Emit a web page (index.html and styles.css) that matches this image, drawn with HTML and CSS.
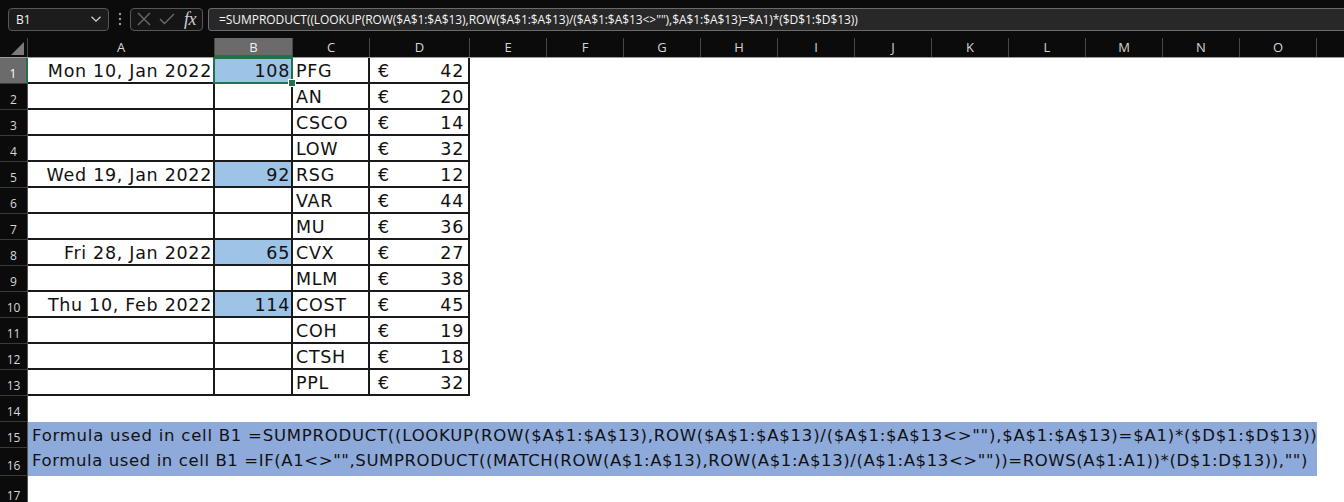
FILE: index.html
```html
<!DOCTYPE html>
<html>
<head>
<meta charset="utf-8">
<link rel="stylesheet" href="styles.css">
</head>
<body>
<div class="bar">
  <div class="namebox">
    <span>B1</span>
    <svg class="chev" width="12" height="8" viewBox="0 0 12 8"><path d="M1.5 1.8 L6 6.2 L10.5 1.8" fill="none" stroke="#cfcfcf" stroke-width="1.3"/></svg>
  </div>
  <div class="dots"><svg width="4" height="14" viewBox="0 0 4 14"><circle cx="2" cy="2" r="1.2" fill="#9a9a9a"/><circle cx="2" cy="7" r="1.2" fill="#9a9a9a"/><circle cx="2" cy="12" r="1.2" fill="#9a9a9a"/></svg></div>
  <div class="fxbox">
    <svg width="14" height="14" viewBox="0 0 14 14"><path d="M1 1 L13 13 M13 1 L1 13" stroke="#6e6e6e" stroke-width="1.3" fill="none"/></svg>
    <svg width="16" height="12" viewBox="0 0 16 12"><path d="M1 6 L5.5 10.5 L15 1" stroke="#6e6e6e" stroke-width="1.3" fill="none"/></svg>
    <i class="fx">fx</i>
  </div>
  <div class="formula">=SUMPRODUCT((LOOKUP(ROW($A$1:$A$13),ROW($A$1:$A$13)/($A$1:$A$13&lt;&gt;""),$A$1:$A$13)=$A1)*($D$1:$D$13))</div>
</div>

<div class="sheet">
  <div class="hrow">
    <div class="corner"><svg width="13" height="13" viewBox="0 0 13 13"><path d="M13 0 L13 13 L0 13 Z" fill="#7a7a7a"/></svg></div>
    <div class="ch ca">A</div>
    <div class="ch cb sel">B</div>
    <div class="ch cc">C</div>
    <div class="ch cd">D</div>
    <div class="ch ce">E</div>
    <div class="ch ce">F</div>
    <div class="ch ce">G</div>
    <div class="ch ce">H</div>
    <div class="ch ce">I</div>
    <div class="ch ce">J</div>
    <div class="ch ce">K</div>
    <div class="ch ce">L</div>
    <div class="ch ce">M</div>
    <div class="ch ce">N</div>
    <div class="ch ce">O</div>
    <div class="ch cp"></div>
  </div>

  <div class="row">
    <div class="rh sel">1</div>
    <div class="c ca r">Mon 10, Jan 2022</div>
    <div class="c cb r fill active">108</div>
    <div class="c cc">PFG</div>
    <div class="c cd"><span>€</span><span>42</span></div>
  </div>
  <div class="row">
    <div class="rh">2</div>
    <div class="c ca r"></div>
    <div class="c cb r"></div>
    <div class="c cc">AN</div>
    <div class="c cd"><span>€</span><span>20</span></div>
  </div>
  <div class="row">
    <div class="rh">3</div>
    <div class="c ca r"></div>
    <div class="c cb r"></div>
    <div class="c cc">CSCO</div>
    <div class="c cd"><span>€</span><span>14</span></div>
  </div>
  <div class="row">
    <div class="rh">4</div>
    <div class="c ca r"></div>
    <div class="c cb r"></div>
    <div class="c cc">LOW</div>
    <div class="c cd"><span>€</span><span>32</span></div>
  </div>
  <div class="row">
    <div class="rh">5</div>
    <div class="c ca r">Wed 19, Jan 2022</div>
    <div class="c cb r fill">92</div>
    <div class="c cc">RSG</div>
    <div class="c cd"><span>€</span><span>12</span></div>
  </div>
  <div class="row">
    <div class="rh">6</div>
    <div class="c ca r"></div>
    <div class="c cb r"></div>
    <div class="c cc">VAR</div>
    <div class="c cd"><span>€</span><span>44</span></div>
  </div>
  <div class="row">
    <div class="rh">7</div>
    <div class="c ca r"></div>
    <div class="c cb r"></div>
    <div class="c cc">MU</div>
    <div class="c cd"><span>€</span><span>36</span></div>
  </div>
  <div class="row">
    <div class="rh">8</div>
    <div class="c ca r">Fri 28, Jan 2022</div>
    <div class="c cb r fill">65</div>
    <div class="c cc">CVX</div>
    <div class="c cd"><span>€</span><span>27</span></div>
  </div>
  <div class="row">
    <div class="rh">9</div>
    <div class="c ca r"></div>
    <div class="c cb r"></div>
    <div class="c cc">MLM</div>
    <div class="c cd"><span>€</span><span>38</span></div>
  </div>
  <div class="row">
    <div class="rh">10</div>
    <div class="c ca r">Thu 10, Feb 2022</div>
    <div class="c cb r fill">114</div>
    <div class="c cc">COST</div>
    <div class="c cd"><span>€</span><span>45</span></div>
  </div>
  <div class="row">
    <div class="rh">11</div>
    <div class="c ca r"></div>
    <div class="c cb r"></div>
    <div class="c cc">COH</div>
    <div class="c cd"><span>€</span><span>19</span></div>
  </div>
  <div class="row">
    <div class="rh">12</div>
    <div class="c ca r"></div>
    <div class="c cb r"></div>
    <div class="c cc">CTSH</div>
    <div class="c cd"><span>€</span><span>18</span></div>
  </div>
  <div class="row">
    <div class="rh">13</div>
    <div class="c ca r"></div>
    <div class="c cb r"></div>
    <div class="c cc">PPL</div>
    <div class="c cd"><span>€</span><span>32</span></div>
  </div>
  <div class="row">
    <div class="rh">14</div>
  </div>
  <div class="row r15">
    <div class="rh">15</div>
    <div class="hl">Formula used in cell B1 =SUMPRODUCT((LOOKUP(ROW($A$1:$A$13),ROW($A$1:$A$13)/($A$1:$A$13&lt;&gt;""),$A$1:$A$13)=$A1)*($D$1:$D$13))</div>
  </div>
  <div class="row r16">
    <div class="rh">16</div>
    <div class="hl">Formula used in cell B1 =IF(A1&lt;&gt;"",SUMPRODUCT((MATCH(ROW(A$1:A$13),ROW(A$1:A$13)/(A$1:A$13&lt;&gt;""))=ROWS(A$1:A1))*(D$1:D$13)),"")</div>
  </div>
  <div class="row r17">
    <div class="rh">17</div>
  </div>
</div>
</body>
</html>
```

FILE: styles.css
```css
html, body {
  margin: 0;
  padding: 0;
  background: #ffffff;
  overflow: hidden;
}

.bar {
  height: 38px;
  background: #0b0b0b;
  display: flex;
  align-items: center;
  padding-left: 8px;
  box-sizing: border-box;
  font-family: "Open Sans", "Noto Sans", sans-serif;
}

.namebox {
  width: 101px;
  height: 23px;
  box-sizing: border-box;
  border: 1px solid #575757;
  border-radius: 4px;
  background: #1c1c1c;
  display: flex;
  align-items: center;
  justify-content: space-between;
  padding: 0 6px 0 7px;
  color: #f2f2f2;
  font-size: 12px;
}

.dots {
  width: 21px;
  display: flex;
  justify-content: center;
  align-items: center;
}

.fxbox {
  width: 73px;
  height: 23px;
  box-sizing: border-box;
  border: 1px solid #575757;
  border-radius: 4px;
  background: #151515;
  display: flex;
  align-items: center;
  gap: 8px;
  padding-left: 6px;
}

.fx {
  font-family: "Liberation Serif", "DejaVu Serif", serif;
  font-size: 18px;
  color: #cfcfcf;
  letter-spacing: -0.5px;
  margin-left: 1px;
}

.formula {
  flex: 1;
  margin-left: 5px;
  margin-right: -12px;
  height: 23px;
  box-sizing: border-box;
  border: 1px solid #6b6b6b;
  border-radius: 3px;
  background: #282828;
  color: #f5f5f5;
  font-size: 12px;
  letter-spacing: -0.06px;
  line-height: 21px;
  padding-left: 10px;
  white-space: nowrap;
  overflow: hidden;
}

.sheet {
  font-family: "DejaVu Sans", sans-serif;
}

.hrow {
  display: flex;
  height: 20px;
  background: #0b0b0b;
  border-bottom: 1px solid #9a9a9a;
  box-sizing: border-box;
}

.corner {
  width: 28px;
  flex: none;
  box-sizing: border-box;
  border-right: 1px solid #474747;
  display: flex;
  align-items: flex-end;
  justify-content: flex-end;
  padding: 0 3px 2px 0;
}

.ch {
  flex: none;
  box-sizing: border-box;
  border-right: 1px solid #474747;
  color: #d6d6d6;
  font-family: "Open Sans", "Noto Sans", sans-serif;
  font-size: 13px;
  line-height: 19px;
  text-align: center;
}

.ch.sel {
  background: #6b6b6b;
  color: #f0f0f0;
  border-bottom: 2px solid #217346;
  line-height: 18px;
}

.ch.cp {
  flex: 1;
  border-right: none;
}

.ca { width: 187px; }
.cb { width: 78px; }
.cc { width: 77px; }
.cd { width: 100px; }
.ce { width: 77px; }

.row {
  display: flex;
  height: 26px;
}

.r16 { height: 28px; }
.r17 { height: 30px; }

.rh {
  width: 28px;
  flex: none;
  box-sizing: border-box;
  background: #0b0b0b;
  border-right: 1px solid #555555;
  border-bottom: 1px solid #3a3a3a;
  color: #d8d8d8;
  font-family: "Open Sans", "Noto Sans", sans-serif;
  font-size: 12px;
  display: flex;
  align-items: flex-end;
  justify-content: center;
  padding-bottom: 1px;
}

.rh.sel {
  background: #6b6b6b;
  color: #ffffff;
  border-right: 2px solid #217346;
}

.c {
  flex: none;
  box-sizing: border-box;
  border-right: 2px solid #1a1a1a;
  border-bottom: 2px solid #1a1a1a;
  font-size: 17.5px;
  letter-spacing: 0.7px;
  color: #111111;
  display: flex;
  align-items: flex-end;
  padding: 0 3px 0 3px;
  white-space: nowrap;
  line-height: 22px;
}

.c.r {
  justify-content: flex-end;
  padding-right: 1px;
}

.c.cd {
  justify-content: space-between;
  padding: 0 4px 0 8px;
}

.fill {
  background: #9dc3e6;
}

.active {
  position: relative;
}

.active::after {
  content: "";
  position: absolute;
  left: -2px;
  top: -1px;
  right: -2px;
  bottom: -2px;
  border: 2px solid #217346;
}

.active::before {
  content: "";
  position: absolute;
  right: -5px;
  bottom: -5px;
  width: 6px;
  height: 6px;
  background: #217346;
  border: 1px solid #ffffff;
  z-index: 2;
}

.hl {
  width: 1289px;
  flex: none;
  background: #8eaadb;
  color: #111111;
  font-size: 16.5px;
  letter-spacing: 0.76px;
  white-space: nowrap;
  padding-left: 4px;
  box-sizing: border-box;
  display: flex;
  align-items: flex-end;
  padding-bottom: 2px;
  line-height: 20px;
}

.r16 .hl {
  letter-spacing: 0.6px;
  padding-bottom: 5px;
}
```
